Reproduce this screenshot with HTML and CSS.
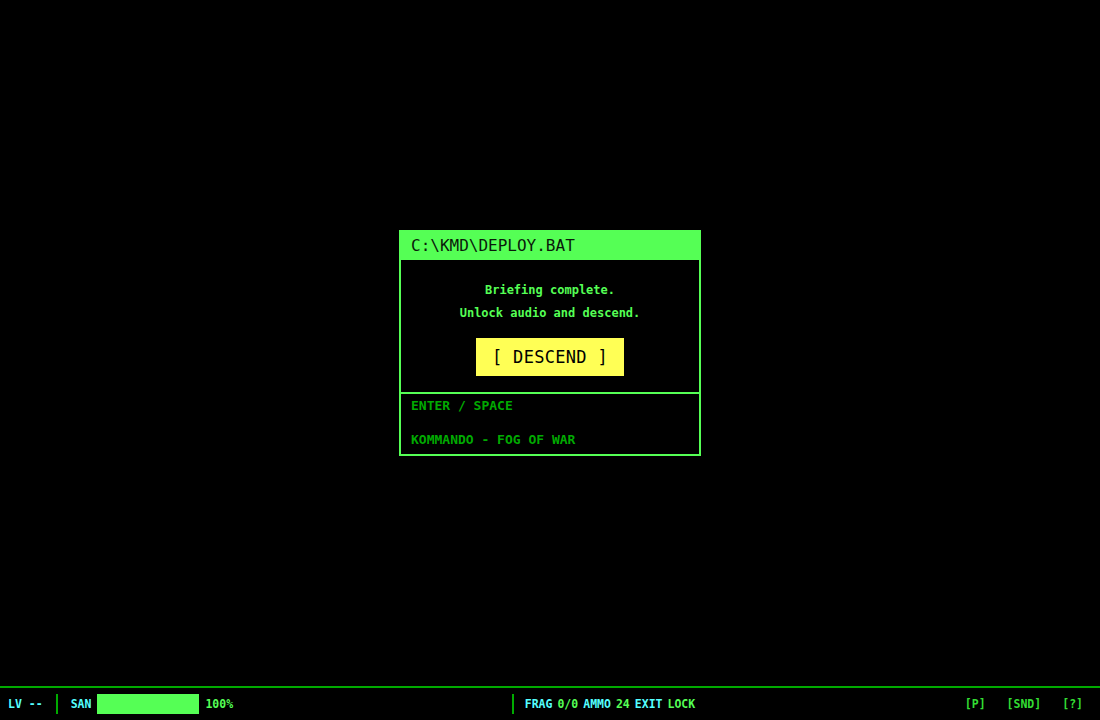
FILE: index.html
```html
<!DOCTYPE html>
<html>
<head>
  <title>KOMMANDO - FOG OF WAR</title>
  <link rel="stylesheet" href="styles.css">
</head>
<body>
  <div class="stage">
    <div class="dialog">
      <div class="dialog-title">C:\KMD\DEPLOY.BAT</div>
      <div class="dialog-body">
        <div class="line">Briefing complete.</div>
        <div class="line">Unlock audio and descend.</div>
        <button class="descend">[ DESCEND ]</button>
      </div>
      <div class="dialog-foot">
        <div class="hint">ENTER / SPACE</div>
        <div class="credit">KOMMANDO - FOG OF WAR</div>
      </div>
    </div>
  </div>

  <div class="hud">
    <div class="hud-left">
      <span class="label">LV --</span>
      <span class="sep"></span>
      <span class="label">SAN</span>
      <span class="san-bar"></span>
      <span class="value">100%</span>
    </div>
    <div class="hud-mid">
      <span class="sep"></span>
      <span class="label">FRAG</span>
      <span class="value">0/0</span>
      <span class="label">AMMO</span>
      <span class="value">24</span>
      <span class="label">EXIT</span>
      <span class="value">LOCK</span>
    </div>
    <div class="hud-right">
      <span class="key">[P]</span>
      <span class="key">[SND]</span>
      <span class="key">[?]</span>
    </div>
  </div>
</body>
</html>
```

FILE: styles.css
```css
html, body {
  margin: 0;
  height: 100%;
}

body {
  display: flex;
  flex-direction: column;
  background-color: #000000;
  font-family: "DejaVu Sans Mono", "Liberation Mono", monospace;
  font-weight: bold;
  color: #55ff55;
}

.stage {
  flex: 1;
  display: flex;
  justify-content: center;
  align-items: center;
}

.dialog {
  width: 298px;
  border: 2px solid #55ff55;
  background-color: #000000;
}

.dialog-title {
  background-color: #55ff55;
  color: #0a1a0a;
  font-size: 16px;
  font-weight: normal;
  line-height: 28px;
  padding-left: 10px;
}

.dialog-body {
  padding: 19px 0 16px;
  text-align: center;
  border-bottom: 2px solid #55ff55;
}

.line {
  font-size: 12px;
  line-height: 23px;
}

.descend {
  margin-top: 13px;
  width: 148px;
  height: 38px;
  border: none;
  background-color: #ffff55;
  color: #000000;
  font-family: "DejaVu Sans Mono", "Liberation Mono", monospace;
  font-size: 17px;
  font-weight: normal;
  letter-spacing: 0.3px;
  cursor: pointer;
}

.dialog-foot {
  padding: 4px 10px 6px;
  color: #00aa00;
  font-size: 13px;
  line-height: 16px;
}

.credit {
  margin-top: 18px;
}

.hud {
  height: 32px;
  border-top: 2px solid #00aa00;
  display: flex;
  justify-content: space-between;
  align-items: center;
  padding: 0 17px 0 8px;
  font-size: 11.5px;
}

.hud-left, .hud-mid, .hud-right {
  display: flex;
  align-items: center;
}

.hud-left {
  gap: 6px;
}

.hud-mid {
  gap: 5px;
  margin-left: 9px;
}

.hud-right {
  gap: 21px;
}

.label {
  color: #55ffff;
}

.value {
  color: #55ff55;
}

.key {
  color: #33dd33;
}

.sep {
  display: inline-block;
  width: 2px;
  height: 20px;
  background-color: #00aa00;
  margin: 0 7px 0 7px;
}

.hud-mid .sep {
  margin: 0 6px 0 0;
}

.san-bar {
  display: inline-block;
  width: 102px;
  height: 20px;
  background-color: #55ff55;
}
```
